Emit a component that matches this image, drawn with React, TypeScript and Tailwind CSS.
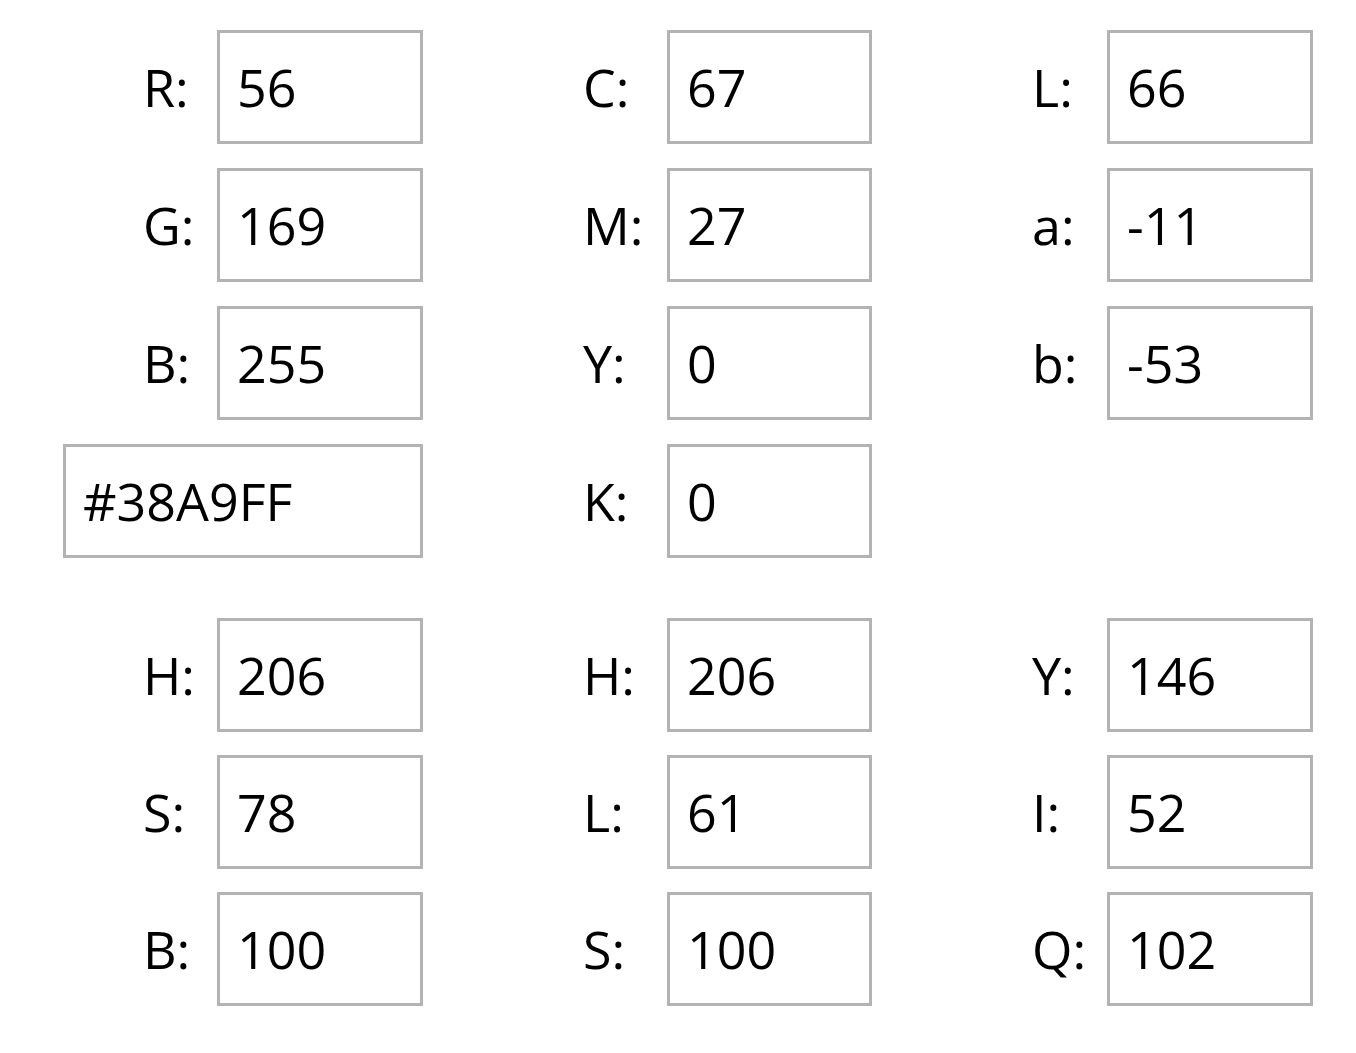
import React from 'react';

type Field = { label: string; value: string } | null;

const groupOne: Field[][] = [
  [
    { label: 'R:', value: '56' },
    { label: 'G:', value: '169' },
    { label: 'B:', value: '255' },
  ],
  [
    { label: 'C:', value: '67' },
    { label: 'M:', value: '27' },
    { label: 'Y:', value: '0' },
    { label: 'K:', value: '0' },
  ],
  [
    { label: 'L:', value: '66' },
    { label: 'a:', value: '-11' },
    { label: 'b:', value: '-53' },
  ],
];

const groupTwo: Field[][] = [
  [
    { label: 'H:', value: '206' },
    { label: 'S:', value: '78' },
    { label: 'B:', value: '100' },
  ],
  [
    { label: 'H:', value: '206' },
    { label: 'L:', value: '61' },
    { label: 'S:', value: '100' },
  ],
  [
    { label: 'Y:', value: '146' },
    { label: 'I:', value: '52' },
    { label: 'Q:', value: '102' },
  ],
];

const Box = ({ value, className }: { value: string; className: string }) => (
  <div
    className={`flex h-full items-center border-[3px] border-[#b3b3b3] bg-white pl-[17px] text-black ${className}`}
  >
    {value}
  </div>
);

const Row = ({ field, labelWidth, boxWidth }: { field: Field; labelWidth: string; boxWidth: string }) => {
  if (!field) return <div />;
  return (
    <div className="flex h-full items-center">
      <span className={`${labelWidth} text-black`}>{field.label}</span>
      <Box value={field.value} className={boxWidth} />
    </div>
  );
};

export default function App() {
  return (
    <div
      className="min-h-[1053px] w-[1356px] bg-white pt-[30px] pl-[63px] text-[52px] leading-none"
      style={{ fontFamily: '"Open Sans", "Noto Sans", sans-serif' }}
    >
      <div className="flex gap-[160px]">
        {/* first column: rgb + hex */}
        <div className="flex w-[360px] flex-col gap-[24px]">
          {groupOne[0].map((f, i) => (
            <div key={i} className="flex h-[114px] justify-end">
              <Row field={f} labelWidth="w-[74px]" boxWidth="w-[206px]" />
            </div>
          ))}
          <div className="h-[114px]">
            <Box value="#38A9FF" className="w-[360px] pl-[16px]" />
          </div>
        </div>
        <div className="flex w-[289px] flex-col gap-[24px]">
          {groupOne[1].map((f, i) => (
            <div key={i} className="h-[114px]">
              <Row field={f} labelWidth="w-[84px]" boxWidth="w-[205px]" />
            </div>
          ))}
        </div>
        <div className="flex w-[281px] flex-col gap-[24px]">
          {groupOne[2].map((f, i) => (
            <div key={i} className="h-[114px]">
              <Row field={f} labelWidth="w-[75px]" boxWidth="w-[206px]" />
            </div>
          ))}
        </div>
      </div>

      <div className="mt-[60px] flex gap-[160px]">
        <div className="flex w-[360px] flex-col gap-[23px]">
          {groupTwo[0].map((f, i) => (
            <div key={i} className="flex h-[114px] justify-end">
              <Row field={f} labelWidth="w-[74px]" boxWidth="w-[206px]" />
            </div>
          ))}
        </div>
        <div className="flex w-[289px] flex-col gap-[23px]">
          {groupTwo[1].map((f, i) => (
            <div key={i} className="h-[114px]">
              <Row field={f} labelWidth="w-[84px]" boxWidth="w-[205px]" />
            </div>
          ))}
        </div>
        <div className="flex w-[281px] flex-col gap-[23px]">
          {groupTwo[2].map((f, i) => (
            <div key={i} className="h-[114px]">
              <Row field={f} labelWidth="w-[75px]" boxWidth="w-[206px]" />
            </div>
          ))}
        </div>
      </div>
    </div>
  );
}
